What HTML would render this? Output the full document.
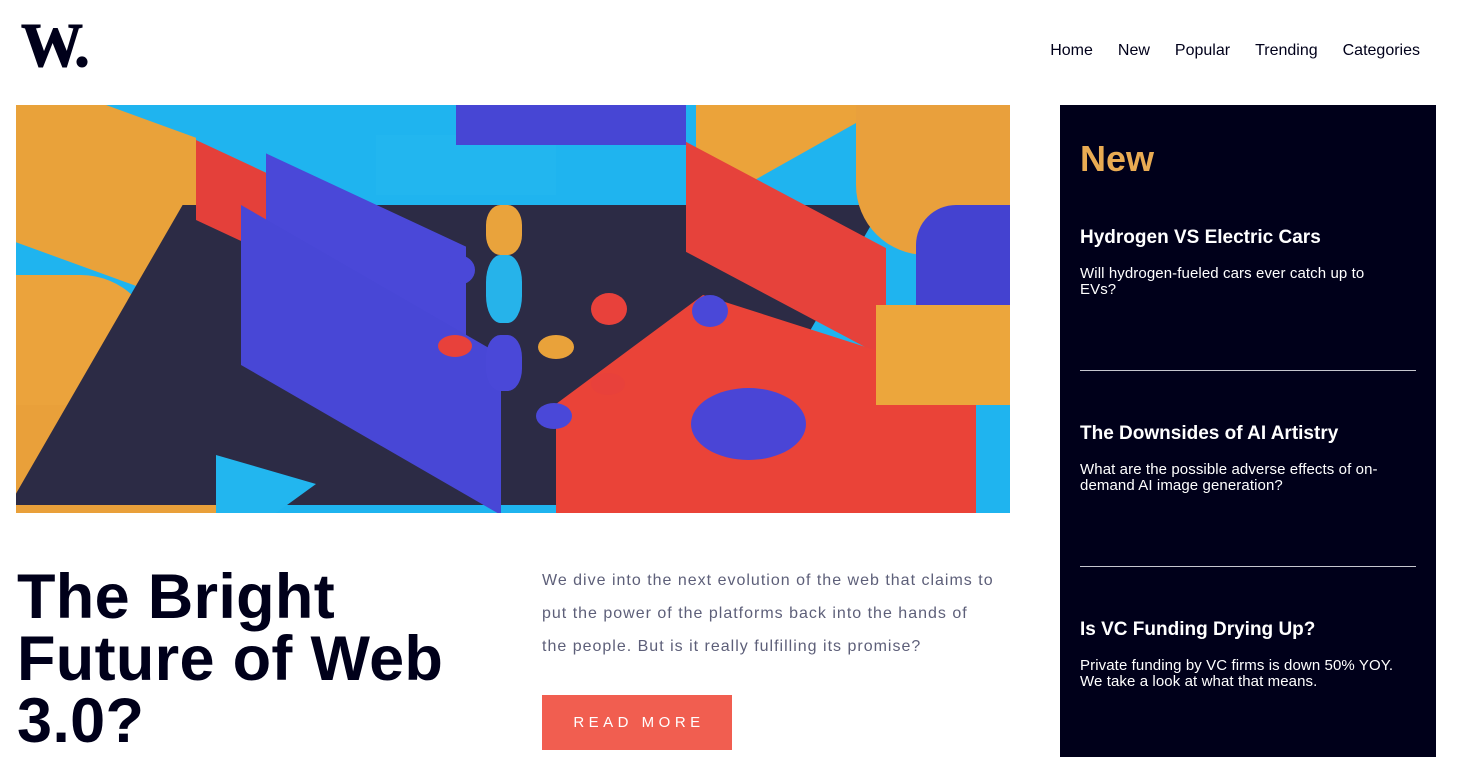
<!DOCTYPE html>
<html><head><style>
*{margin:0;padding:0;box-sizing:border-box}
body{width:1480px;height:757px;overflow:hidden;background:#fff;font-family:"Liberation Sans",sans-serif;position:relative;color:#00001a}
.logo{position:absolute;left:21px;top:20px;font-family:"Liberation Serif",serif;font-weight:bold;font-size:62px;letter-spacing:-3px;color:#00001a;line-height:52px;-webkit-text-stroke:1px #00001a}
nav{position:absolute;top:42px;right:60px;display:flex;gap:25px;font-size:16px;color:#00001a}
.img{position:absolute;left:16px;top:105px;width:994px;height:408px;overflow:hidden;background:#2a2a40}
.img div{position:absolute}
h1{position:absolute;left:17px;top:566px;font-size:63px;line-height:62px;font-weight:bold;letter-spacing:0.3px;width:480px}
.desc{position:absolute;left:542px;top:564px;width:480px;font-size:16px;line-height:33px;color:#5d5f79;letter-spacing:1px;white-space:nowrap}
.btn{position:absolute;left:542px;top:695px;width:190px;height:55px;background:#f15e50;color:#fff;font-size:15px;letter-spacing:4.5px;display:flex;align-items:center;justify-content:center;padding-left:4px}
.side{position:absolute;left:1060px;top:105px;width:376px;height:652px;background:#00001a;padding:0 20px;color:#fff}
.side h2{color:#e9ab53;font-size:36px;position:absolute;left:20px;top:33px}
.item{position:absolute;left:20px;width:336px}
.item h3{font-size:19px;margin-bottom:17px}
.item p{font-size:15px;line-height:16px;color:#fff;width:322px;letter-spacing:0.1px}
.hr{position:absolute;left:20px;width:336px;height:1px;background:#c5c6ce}
</style></head><body>
<div class="logo">W.</div>
<nav><span>Home</span><span>New</span><span>Popular</span><span>Trending</span><span>Categories</span></nav>
<div class="img">
<div style="left:0;top:0;width:994px;height:408px;background:#1fb4ef"></div>
<div style="left:0;top:0;width:180px;height:170px;background:#e9a23a;transform:skewY(20deg)"></div>
<div style="left:0;top:170px;width:140px;height:150px;background:#eba33c;border-radius:0 80px 80px 0"></div>
<div style="left:0;top:300px;width:210px;height:110px;background:#e9a03a"></div>
<div style="left:80px;top:100px;width:700px;height:300px;background:#2c2b45;transform:skewX(-30deg)"></div>
<div style="left:180px;top:70px;width:150px;height:80px;background:#e4403a;transform:skewY(25deg)"></div>
<div style="left:250px;top:95px;width:200px;height:120px;background:#4a48d8;transform:skewY(25deg)"></div>
<div style="left:225px;top:175px;width:260px;height:160px;background:#4847d6;transform:skewY(30deg)"></div>
<div style="left:360px;top:30px;width:180px;height:60px;background:#22b6ef"></div>
<div style="left:440px;top:0;width:230px;height:40px;background:#4746d4"></div>
<div style="left:680px;top:0;width:160px;height:90px;background:#eba33a;clip-path:polygon(0 0,100% 0,100% 20%,20% 100%,0 80%)"></div>
<div style="left:840px;top:0;width:154px;height:150px;background:#e9a03c;border-radius:0 0 0 70px"></div>
<div style="left:900px;top:100px;width:94px;height:130px;background:#4442d0;border-radius:40px 0 0 0"></div>
<div style="left:670px;top:90px;width:200px;height:110px;background:#e6423b;transform:skewY(28deg)"></div>
<div style="left:540px;top:190px;width:420px;height:218px;background:#ea4338;clip-path:polygon(35% 0,100% 40%,100% 100%,0 100%,0 50%)"></div>
<div style="left:675px;top:283px;width:115px;height:72px;background:#4a45d6;border-radius:50%"></div>
<div style="left:860px;top:200px;width:134px;height:100px;background:#eca63c"></div>
<div style="left:200px;top:350px;width:100px;height:58px;background:#22b6ef;clip-path:polygon(0 0,100% 50%,60% 100%,0 100%)"></div>
<div style="left:470px;top:100px;width:36px;height:50px;background:#e9a33c;border-radius:40%"></div>
<div style="left:470px;top:150px;width:36px;height:68px;background:#26b3ea;border-radius:40%"></div>
<div style="left:425px;top:150px;width:34px;height:30px;background:#4a48d8;border-radius:50%"></div>
<div style="left:470px;top:230px;width:36px;height:56px;background:#4a48d8;border-radius:40%"></div>
<div style="left:575px;top:188px;width:36px;height:32px;background:#e8413b;border-radius:50%"></div>
<div style="left:676px;top:190px;width:36px;height:32px;background:#4a48d8;border-radius:50%"></div>
<div style="left:522px;top:230px;width:36px;height:24px;background:#e9a23a;border-radius:50%"></div>
<div style="left:422px;top:230px;width:34px;height:22px;background:#e8413b;border-radius:50%"></div>
<div style="left:575px;top:268px;width:34px;height:22px;background:#e8413b;border-radius:50%"></div>
<div style="left:520px;top:298px;width:36px;height:26px;background:#4a48d8;border-radius:50%"></div>
</div>
<h1>The Bright Future of Web 3.0?</h1>
<div class="desc">We dive into the next evolution of the web that claims to<br>put the power of the platforms back into the hands of<br>the people. But is it really fulfilling its promise?</div>
<div class="btn">READ MORE</div>
<div class="side">
<h2>New</h2>
<div class="item" style="top:122px"><h3>Hydrogen VS Electric Cars</h3><p>Will hydrogen-fueled cars ever catch up to EVs?</p></div>
<div class="hr" style="top:265px"></div>
<div class="item" style="top:318px"><h3>The Downsides of AI Artistry</h3><p>What are the possible adverse effects of on-demand AI image generation?</p></div>
<div class="hr" style="top:461px"></div>
<div class="item" style="top:514px"><h3>Is VC Funding Drying Up?</h3><p>Private funding by VC firms is down 50% YOY. We take a look at what that means.</p></div>
</div>
</body></html>
